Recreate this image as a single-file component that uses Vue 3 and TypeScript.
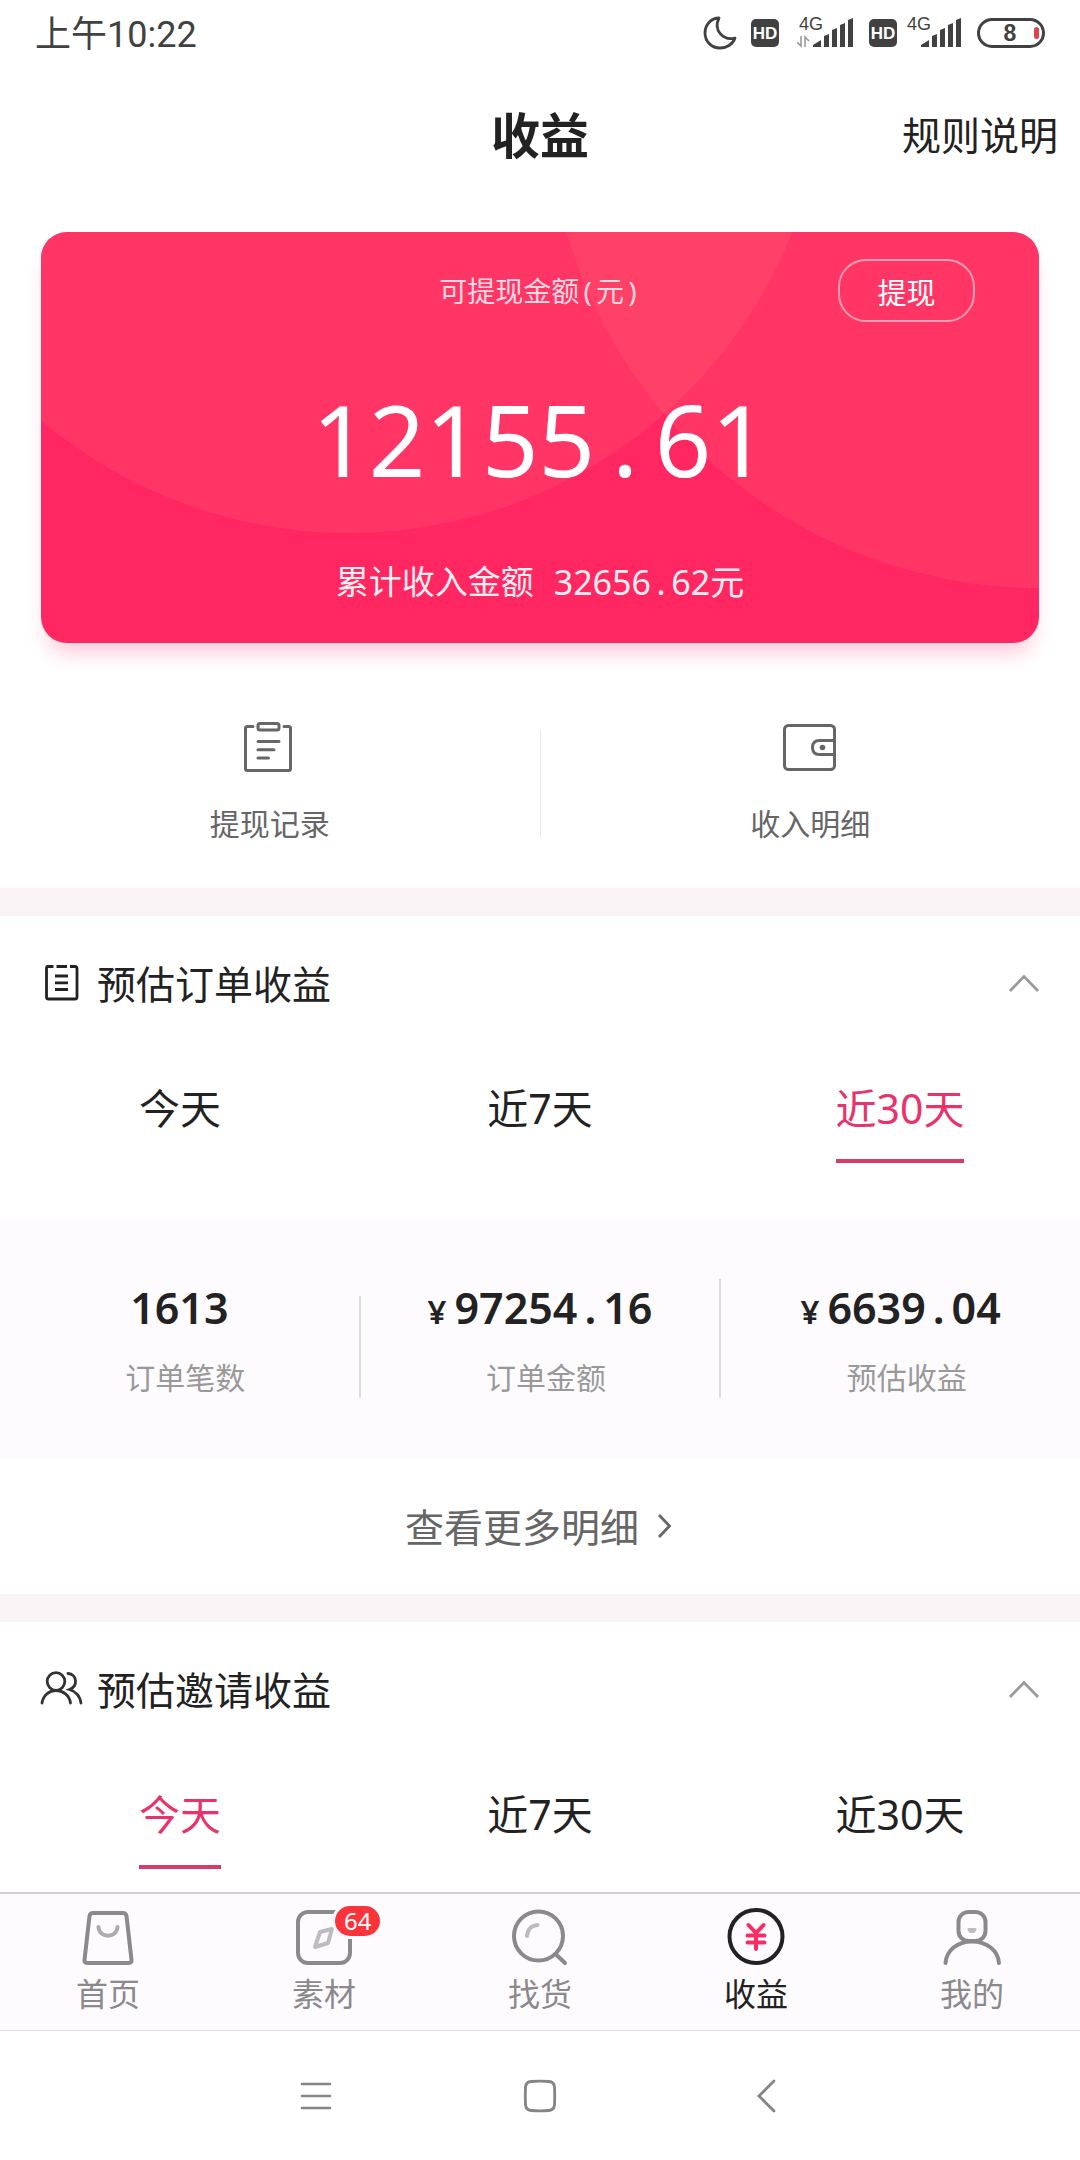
<script setup lang="ts">
import { ref } from 'vue'

interface Stat {
  label: string
  value: string
  money: boolean
}

const ranges: string[] = ['今天', '近7天', '近30天']
const orderRange = ref(2)
const inviteRange = ref(0)

const stats: Stat[] = [
  { label: '订单笔数', value: '1613', money: false },
  { label: '订单金额', value: '97254.16', money: true },
  { label: '预估收益', value: '6639.04', money: true },
]

const tabs = [
  { id: 'home', label: '首页' },
  { id: 'material', label: '素材', badge: 64 },
  { id: 'search', label: '找货' },
  { id: 'income', label: '收益' },
  { id: 'mine', label: '我的' },
]
const activeTab = ref('income')

const split = (value: string): string[] => value.split('.')
</script>

<template>
  <div class="page">
    <div class="status">
      <span class="clock">上午10:22</span>
      <div class="signals">
        <svg class="moon" width="34" height="34" viewBox="0 0 34 34">
          <path d="M16 2 C8 2 2 9 2 17 C2 26 9 32 17 32 C24 32 30 28 32 22 C20 25 10 14 16 2 Z" fill="none" stroke="#414141" stroke-width="2.8" stroke-linejoin="round" />
        </svg>
        <svg class="hd" width="28" height="34" viewBox="0 0 28 34">
          <rect y="3" width="28" height="28" rx="5" fill="#414141" />
          <text x="14" y="23" text-anchor="middle" font-size="17" font-weight="700" fill="#fff">HD</text>
        </svg>
        <svg class="cell" width="56" height="42" viewBox="0 -4 56 42">
          <text x="2" y="14" font-size="18" fill="#414141">4G</text>
          <path d="M4 20 V30 L0 26 M8 31 V21 L12 25" fill="none" stroke="#9a9a9a" stroke-width="1.6" />
          <path d="M16 31 V29 L24 24 V31 Z M27 31 V20 L32 18 V31 Z M35 31 V14 L40 12 V31 Z M43 31 V9 L48 7 V31 Z M51 31 V4 L56 2 V31 Z" fill="#414141" />
        </svg>
        <svg class="hd" width="28" height="34" viewBox="0 0 28 34">
          <rect y="3" width="28" height="28" rx="5" fill="#414141" />
          <text x="14" y="23" text-anchor="middle" font-size="17" font-weight="700" fill="#fff">HD</text>
        </svg>
        <svg class="cell second" width="56" height="42" viewBox="0 -4 56 42">
          <text x="2" y="14" font-size="18" fill="#414141">4G</text>
          <path d="M16 31 V29 L24 24 V31 Z M27 31 V20 L32 18 V31 Z M35 31 V14 L40 12 V31 Z M43 31 V9 L48 7 V31 Z M51 31 V4 L56 2 V31 Z" fill="#414141" />
        </svg>
        <svg class="battery" width="68" height="34" viewBox="0 0 68 34">
          <rect x="1.5" y="3.5" width="65" height="27" rx="13.5" fill="none" stroke="#414141" stroke-width="3" />
          <text x="33" y="25" text-anchor="middle" font-size="23" font-weight="700" fill="#414141">8</text>
          <rect x="57" y="11" width="5" height="12" rx="2.5" fill="#e0424a" />
        </svg>
      </div>
    </div>

    <header class="header">
      <h1>收益</h1>
      <a href="#rules">规则说明</a>
    </header>

    <main>
      <section class="card">
        <svg class="rings" viewBox="0 0 998 411" preserveAspectRatio="xMidYMid slice">
          <circle cx="308" cy="-176" r="477" />
          <circle cx="999" cy="-137" r="493" />
        </svg>
        <div class="card-head">
          <span class="card-label">可提现金额<i class="slot">(</i>元<i class="slot">)</i></span>
          <button type="button" class="withdraw">提现</button>
        </div>
        <p class="balance">12155<i class="slot">.</i>61</p>
        <p class="total"><span>累计收入金额</span><span class="sum">32656<i class="slot">.</i>62元</span></p>
      </section>

      <nav class="links">
        <a href="#records">
          <svg width="54" height="50" viewBox="2 0 54 50" fill="none" stroke="#666" stroke-width="3" stroke-linecap="round" stroke-linejoin="round">
            <path d="M12 4.5 H6.5 Q4.5 4.5 4.5 6.5 V46.5 Q4.5 48.5 6.5 48.5 H47.5 Q49.5 48.5 49.5 46.5 V6.5 Q49.5 4.5 47.5 4.5 H43" />
            <rect x="17" y="1.5" width="21" height="6.5" rx="2" />
            <path d="M17 19.5 H38 M17 27.8 H33 M17 36 H27.5" />
          </svg>
          <span>提现记录</span>
        </a>
        <span class="links-rule"></span>
        <a href="#income">
          <svg width="54" height="50" viewBox="0 0 54 50" fill="none" stroke="#666" stroke-width="3">
            <rect x="1.5" y="3.5" width="50" height="44" rx="4" />
            <path d="M51 18.5 H36.5 Q29.5 18.5 29.5 25.5 Q29.5 32.5 36.5 32.5 H51" />
            <circle cx="39.5" cy="25.5" r="2.8" fill="#666" stroke="none" />
          </svg>
          <span>收入明细</span>
        </a>
      </nav>

      <section class="panel">
        <div class="panel-head">
          <svg width="44" height="44" viewBox="0 0 44 44" fill="none" stroke="#222" stroke-width="2.8">
            <path d="M13.5 4.5 H8 Q6.5 4.5 6.5 6.5 V35 Q6.5 37 8.5 37 H35 Q37 37 37 35 V6.5 Q37 4.5 35 4.5 H30 M16.5 4.5 H27 M15 14 H28 M15 20.8 H28 M15 27.5 H28" />
          </svg>
          <h2>预估订单收益</h2>
          <button type="button" class="fold" aria-label="收起">
            <svg width="34" height="22" viewBox="0 0 34 22" fill="none" stroke="#9b9b9b" stroke-width="2.8">
              <path d="M3 18 L17 3.5 L31 18" />
            </svg>
          </button>
        </div>
        <div class="ranges">
          <button v-for="(name, i) in ranges" :key="name" type="button" :class="{ on: i === orderRange }" @click="orderRange = i">
            <span>{{ name }}</span>
          </button>
        </div>
        <div class="stats">
          <template v-for="(s, i) in stats" :key="s.label">
            <span v-if="i > 0" class="rule" :class="{ tall: i > 1 }"></span>
            <div class="stat">
              <p class="value"><small v-if="s.money">¥</small>{{ split(s.value)[0] }}<template v-if="s.money"><i class="slot">.</i>{{ split(s.value)[1] }}</template></p>
              <p class="name">{{ s.label }}</p>
            </div>
          </template>
        </div>
        <a class="more" href="#orders">
          <span>查看更多明细</span>
          <svg width="20" height="28" viewBox="0 0 20 28" fill="none" stroke="#666" stroke-width="2.8">
            <path d="M4 2 L14.5 13 L4 24" />
          </svg>
        </a>
      </section>

      <section class="panel last">
        <div class="panel-head">
          <svg width="44" height="44" viewBox="0 0 44 44" fill="none" stroke="#333" stroke-width="2.8" stroke-linecap="round">
            <circle cx="16" cy="13.5" r="8.8" />
            <path d="M2 35 C3 27.5 9 22.5 16 22.5 C23 22.5 29.5 27.5 30.5 35 M28 5.5 C37 6 38.5 18 29.5 21.5 C36 23.5 40 28.5 41 35" />
          </svg>
          <h2>预估邀请收益</h2>
          <button type="button" class="fold" aria-label="收起">
            <svg width="34" height="22" viewBox="0 0 34 22" fill="none" stroke="#9b9b9b" stroke-width="2.8">
              <path d="M3 18 L17 3.5 L31 18" />
            </svg>
          </button>
        </div>
        <div class="ranges">
          <button v-for="(name, i) in ranges" :key="name" type="button" :class="{ on: i === inviteRange }" @click="inviteRange = i">
            <span>{{ name }}</span>
          </button>
        </div>
      </section>
    </main>

    <nav class="tabbar">
      <button v-for="t in tabs" :key="t.id" type="button" :class="{ active: t.id === activeTab }" @click="activeTab = t.id">
        <span class="tab-icon">
          <svg width="60" height="60" viewBox="0 0 60 60" fill="none" stroke="currentColor" stroke-width="4" stroke-linecap="round" stroke-linejoin="round">
            <template v-if="t.id === 'home'">
              <path d="M15 6 H45 Q48 6 48.5 9 L53.5 53 Q53.8 56 51 56 H9 Q6.2 56 6.5 53 L11.5 9 Q12 6 15 6 Z" />
              <path d="M20.5 20 C21 31.5 39 31.5 39.5 20" stroke="#adabae" />
            </template>
            <template v-else-if="t.id === 'material'">
              <rect x="4" y="5" width="52" height="51" rx="10" />
              <path d="M26 25 L38 22 L34 36 L21 40 Z" stroke="#bdbbbe" />
            </template>
            <template v-else-if="t.id === 'search'">
              <circle cx="28.5" cy="29" r="24.5" />
              <path d="M45.5 47 L55 56" />
              <path d="M17 29 C17.5 22.5 21.5 18.5 27.5 18" stroke="#bdbbbe" />
            </template>
            <template v-else-if="t.id === 'income'">
              <circle cx="30" cy="29.5" r="26.5" />
              <path d="M22.5 18 L30 26 L37.5 18 M21.5 28.5 H38.5 M21.5 35.5 H38.5 M30 26 V42" stroke="#fb2c63" />
            </template>
            <template v-else>
              <rect x="16.5" y="5" width="27" height="29" rx="10" />
              <path d="M3.5 56 C4.5 43.5 15 34.5 30 34.5 C45 34.5 56 43.5 57 56" />
              <path d="M27 22.5 H33 L31.5 24.5 H28.5 Z" stroke="#bdbbbe" stroke-width="3" />
            </template>
          </svg>
          <b v-if="t.badge" class="badge">{{ t.badge }}</b>
        </span>
        <span>{{ t.label }}</span>
      </button>
    </nav>

    <div class="system">
      <button type="button" aria-label="菜单">
        <svg width="36" height="36" viewBox="0 0 36 36" fill="none" stroke="#858585" stroke-width="2.6" stroke-linecap="round">
          <path d="M5 6 H33 M5 18 H33 M5 30 H33" />
        </svg>
      </button>
      <button type="button" aria-label="主页">
        <svg width="36" height="36" viewBox="0 0 36 36" fill="none" stroke="#858585" stroke-width="2.8">
          <path d="M9 3.5 Q18 2.8 27 3.5 Q32 3.8 32.5 9 Q33 18 32.5 27 Q32 32 27 32.5 Q18 33.2 9 32.5 Q4 32 3.5 27 Q3 18 3.5 9 Q4 3.8 9 3.5 Z" />
        </svg>
      </button>
      <button type="button" aria-label="返回">
        <svg width="36" height="36" viewBox="0 0 36 36" fill="none" stroke="#858585" stroke-width="2.8" stroke-linecap="round">
          <path d="M27 3 L12 18 L27 33" />
        </svg>
      </button>
    </div>
  </div>
</template>

<style>
body {
  background: #fff;
}
</style>

<style scoped>
.page {
  display: flex;
  flex-direction: column;
  min-height: 100vh;
  background: #fff;
  color: #222;
  font-family: "Noto Sans", "Noto Sans CJK SC", sans-serif;
}
h1, h2, p {
  margin: 0;
  font-weight: 400;
}
a {
  color: inherit;
  text-decoration: none;
}
button {
  margin: 0;
  padding: 0;
  border: 0;
  background: none;
  color: inherit;
  font: inherit;
}
svg {
  display: block;
  flex: none;
}
svg text {
  font-family: "Liberation Sans", sans-serif;
}
/* punctuation takes the full width of a figure, as in a monospaced face */
.slot {
  display: inline-block;
  width: 0.6em;
  font-style: normal;
  text-align: center;
}

.status {
  display: flex;
  align-items: center;
  justify-content: space-between;
  height: 66px;
  padding: 0 35px;
  color: #414141;
}
.clock {
  padding-top: 4px;
  font-family: Roboto, "Noto Sans CJK SC", sans-serif;
  font-size: 36px;
  line-height: 60px;
}
.signals {
  display: flex;
  align-items: center;
}
.hd {
  margin-left: 14px;
}
.cell {
  margin-left: 18px;
}
.cell + .hd {
  margin-left: 16px;
}
.cell.second {
  margin-left: 8px;
}
.battery {
  margin-left: 16px;
}

.header {
  display: grid;
  grid-template-columns: 1fr auto 1fr;
  align-items: center;
  height: 137px;
  padding: 0 22px;
}
.header h1 {
  grid-column: 2;
  font-size: 49px;
  font-weight: 700;
  line-height: 70px;
}
.header a {
  justify-self: end;
  font-size: 39px;
  line-height: 60px;
}

main {
  display: flex;
  flex-direction: column;
  flex: 1;
}
.card {
  position: relative;
  margin: 29px 41px 0;
  padding: 27px 0 36px;
  border-radius: 26px;
  background: #ff2762;
  box-shadow: 0 16px 20px -6px rgba(255, 39, 98, 0.24);
  color: #fff;
  text-align: center;
}
.rings {
  position: absolute;
  inset: 0;
  width: 100%;
  height: 100%;
  border-radius: 26px;
  fill: rgba(255, 84, 108, 0.34);
}
.card-head, .balance, .total {
  position: relative;
}
.card-head {
  display: grid;
  grid-template-columns: 1fr auto 1fr;
  align-items: center;
  padding: 0 64px;
}
.card-label {
  grid-column: 2;
  color: #ffd9e2;
  font-size: 28px;
  line-height: 40px;
}
.withdraw {
  justify-self: end;
  width: 137px;
  height: 63px;
  border: 2px solid #ff9db4;
  border-radius: 28px;
  font-size: 29px;
}
.balance {
  margin-top: 57px;
  font-size: 99px;
  line-height: 120px;
}
.total {
  display: flex;
  justify-content: center;
  gap: 20px;
  margin-top: 58px;
  font-size: 33px;
  line-height: 50px;
  color: #ffeef2;
}
.sum {
  font-size: 34px;
}

.links {
  display: flex;
  align-items: center;
  padding: 79px 0 44px;
  color: #666;
}
.links a {
  display: flex;
  flex: 1;
  flex-direction: column;
  align-items: center;
  gap: 32px;
  font-size: 30px;
  line-height: 40px;
}
.links-rule {
  width: 1px;
  height: 107px;
  background: #e6e6e6;
}

.panel {
  border-top: 28px solid #f9f3f6;
}
.last {
  flex: 1;
  padding-bottom: 23px;
}
.panel-head {
  display: flex;
  align-items: center;
  height: 136px;
  padding: 0 39px 0 40px;
}
.panel-head h2 {
  flex: 1;
  margin-left: 13px;
  font-size: 39px;
  line-height: 60px;
}
.ranges {
  display: flex;
  padding-top: 26px;
}
.ranges button {
  flex: 1;
  font-size: 41px;
  line-height: 60px;
}
.ranges span {
  display: block;
  width: fit-content;
  margin: 0 auto;
  padding-bottom: 21px;
  border-bottom: 4px solid transparent;
}
.ranges .on {
  color: #e8336a;
}
.ranges .on span {
  border-color: #d83b68;
}
.stats {
  display: flex;
  align-items: flex-end;
  margin-top: 57px;
  padding: 58px 0 61px;
  background: #fefbff;
}
.stat {
  flex: 1;
  text-align: center;
}
.rule {
  width: 2px;
  height: 102px;
  background: #dcd9df;
}
.rule.tall {
  height: 119px;
}
.value {
  height: 60px;
  font-size: 43px;
  font-weight: 600;
  line-height: 60px;
}
.value small {
  margin-right: 8px;
  font-size: 33px;
  line-height: 1;
}
.name {
  margin-top: 20px;
  padding-left: 12px;
  color: #999;
  font-size: 30px;
  line-height: 40px;
}
.more {
  display: flex;
  align-items: center;
  justify-content: center;
  gap: 16px;
  height: 135px;
  color: #666;
  font-size: 39px;
  line-height: 60px;
}

.tabbar {
  display: flex;
  border-top: 2px solid #d1ced4;
  border-bottom: 1px solid #dddbe0;
  background: #fefbff;
  color: #8b898c;
}
.tabbar button {
  display: flex;
  flex: 1;
  flex-direction: column;
  align-items: center;
  gap: 7px;
  padding: 13px 0 16px;
  font-size: 32px;
  line-height: 40px;
}
.tabbar .active {
  color: #222;
}
.tab-icon {
  position: relative;
}
.badge {
  position: absolute;
  top: -4px;
  left: 38px;
  padding: 0 9px;
  border: 3px solid #fefbff;
  border-radius: 18px;
  background: #fb333a;
  color: #fff;
  font-size: 24px;
  font-weight: 400;
  line-height: 30px;
}
.system {
  display: flex;
  justify-content: center;
  height: 129px;
}
.system button {
  display: flex;
  align-items: center;
  justify-content: center;
  width: 225px;
}
</style>
